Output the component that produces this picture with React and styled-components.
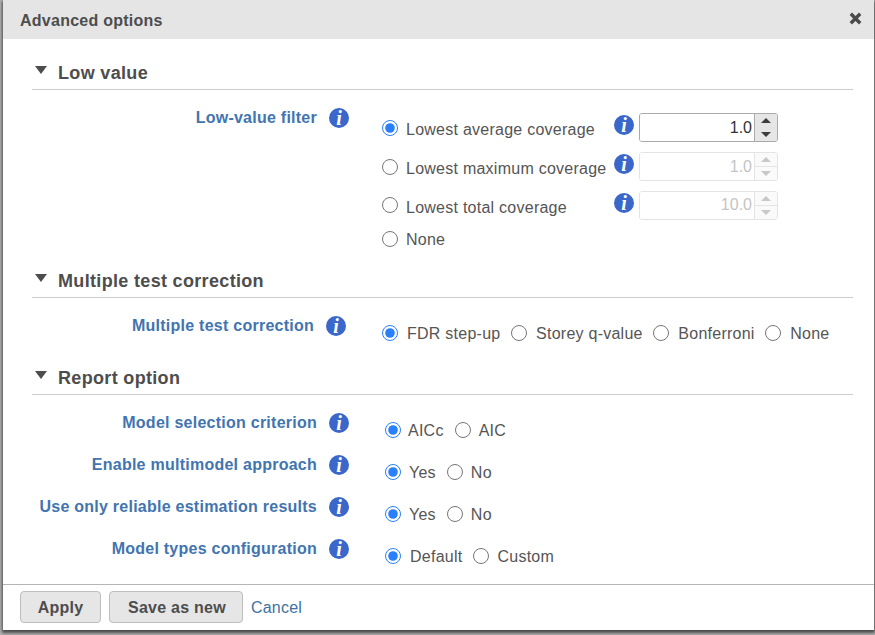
import React from 'react';
import styled, { createGlobalStyle } from 'styled-components';

const GlobalStyle = createGlobalStyle`
  html, body {
    margin: 0;
    padding: 0;
    background: #fff;
    overflow: hidden;
  }
  body {
    font-family: "Liberation Sans", Arial, sans-serif;
    color: #555;
  }
`;

const Page = styled.div`
  width: 875px;
  height: 635px;
  padding: 0 1px 5px 3px;
  box-sizing: border-box;
  background: #b4b4b4;
`;

const Dialog = styled.div`
  height: 630px;
  display: flex;
  flex-direction: column;
  background: #fff;
  box-shadow: 0 2px 3px 1px rgba(0, 0, 0, 0.6);
`;

const Header = styled.div`
  height: 39px;
  flex: none;
  display: flex;
  align-items: center;
  justify-content: space-between;
  padding: 0 12px 0 17px;
  background: #e5e5e5;
`;

const DialogTitle = styled.h1`
  margin: 2px 0 0;
  font-size: 16px;
  font-weight: 700;
  letter-spacing: 0.25px;
  color: #4d4d4d;
`;

const CloseIcon = styled.svg`
  width: 13px;
  height: 13px;
  margin-bottom: 2px;
  fill: #4a4a4a;
`;

const Body = styled.div`
  flex: 1;
  padding: 22px 21px 0 29px;
`;

const SectionHead = styled.div`
  height: 28px;
  display: flex;
  align-items: flex-start;
  gap: 11px;
  padding-left: 3px;
  border-bottom: 1px solid #ccc;
`;

const Caret = styled.span`
  width: 0;
  height: 0;
  margin-top: 5px;
  border-left: 6.5px solid transparent;
  border-right: 6.5px solid transparent;
  border-top: 8px solid #4d4d4d;
`;

const SectionTitle = styled.h2`
  margin: 0;
  font-size: 18px;
  line-height: 25px;
  font-weight: 700;
  letter-spacing: 0.33px;
  color: #4d4d4d;
`;

const FormRow = styled.div`
  display: flex;
  align-items: flex-start;
  height: ${(p) => p.$height}px;
  padding-top: ${(p) => p.$top}px;
`;

const LabelCell = styled.div`
  width: ${(p) => p.$width}px;
  flex: none;
  display: flex;
  justify-content: flex-end;
  align-items: center;
  gap: 12px;
  white-space: nowrap;
`;

const FieldLabel = styled.label`
  font-size: 16px;
  line-height: 20px;
  font-weight: 700;
  letter-spacing: 0.25px;
  color: #4274b0;
`;

const InfoBadge = styled.span`
  width: 20px;
  height: 20px;
  flex: none;
  border-radius: 50%;
  background: #3a67c9;
  color: #fff;
  display: inline-flex;
  align-items: center;
  justify-content: center;
  font-family: "Liberation Serif", serif;
  font-style: italic;
  font-weight: 700;
  font-size: 20px;
  line-height: 20px;
`;

const Controls = styled.div`
  margin-left: ${(p) => p.$left}px;
  margin-top: ${(p) => p.$top || 0}px;
  display: flex;
  align-items: center;
  gap: ${(p) => p.$gap || 10}px;
`;

const CoverageList = styled.div`
  margin-left: 33px;
  margin-top: 2px;
  display: flex;
  flex-direction: column;
  width: 396px;
`;

const CoverageRow = styled.div`
  display: flex;
  align-items: center;
  height: ${(p) => p.$height}px;
`;

const RadioLabel = styled.label`
  display: inline-flex;
  align-items: center;
  flex: none;
  gap: ${(p) => p.$gap || 8}px;
  font-size: 16px;
  line-height: 20px;
  letter-spacing: 0.25px;
  color: #555;
  white-space: nowrap;
  width: ${(p) => (p.$width ? `${p.$width}px` : 'auto')};
`;

const Radio = styled.input.attrs({ type: 'radio' })`
  width: 16px;
  height: 16px;
  margin: 0 0 ${(p) => p.$lift ?? 2}px;
  accent-color: #2a7ffb;
`;

const CoverageInfo = styled.span`
  width: 25px;
  flex: none;
  margin-bottom: 9px;
  display: inline-flex;
`;

const SpinBox = styled.div`
  width: 139px;
  height: 29px;
  flex: none;
  box-sizing: border-box;
  display: flex;
  border: 1px solid ${(p) => (p.$disabled ? '#e4e4e4' : '#aaa')};
  border-radius: 3px;
  overflow: hidden;
  background: #fff;
  margin-bottom: ${(p) => p.$lift}px;
`;

const SpinInput = styled.input`
  flex: 1;
  min-width: 0;
  border: 0;
  padding: 0 2px 0 0;
  text-align: right;
  font-family: "Liberation Sans", Arial, sans-serif;
  font-size: 16px;
  color: ${(p) => (p.disabled ? '#c4c4c4' : '#333')};
  background: #fff;
  outline: none;
`;

const SpinButtons = styled.div`
  width: 22px;
  flex: none;
  display: flex;
  flex-direction: column;
  border-left: 1px solid ${(p) => (p.$disabled ? '#e4e4e4' : '#aaa')};
  background: ${(p) => (p.$disabled ? '#fafafa' : '#e6e6e6')};
`;

const SpinButton = styled.span`
  flex: 1;
  display: flex;
  align-items: center;
  justify-content: center;
  & + & {
    border-top: 1px solid ${(p) => (p.$disabled ? '#e4e4e4' : '#aaa')};
  }
  &::before {
    content: '';
    border-left: 5px solid transparent;
    border-right: 5px solid transparent;
    ${(p) => (p.$dir === 'up' ? 'border-bottom' : 'border-top')}: 5px solid
      ${(p) => (p.$disabled ? '#c8c8c8' : '#3d3d3d')};
  }
`;

const Footer = styled.div`
  height: 39px;
  flex: none;
  display: flex;
  align-items: flex-start;
  padding: 6px 0 0 17px;
  border-top: 1px solid #b5b5b5;
  background: #fff;
`;

const FooterButton = styled.button`
  height: 32px;
  width: ${(p) => p.$width}px;
  margin-right: ${(p) => p.$gap}px;
  padding: 1px 0 0 ${(p) => p.$indent || 0}px;
  border: 1px solid #bdbdbd;
  border-radius: 4px;
  background: #e6e6e6;
  color: #4d4d4d;
  font-family: "Liberation Sans", Arial, sans-serif;
  font-size: 16px;
  font-weight: 700;
  letter-spacing: 0.25px;
`;

const CancelLink = styled.a`
  font-size: 16px;
  line-height: 34px;
  letter-spacing: 0.2px;
  color: #42709f;
  text-decoration: none;
`;

const Spinner = ({ value, disabled, lift }) => (
  <SpinBox $disabled={disabled} $lift={lift}>
    <SpinInput value={value} disabled={disabled} readOnly />
    <SpinButtons $disabled={disabled}>
      <SpinButton $dir="up" $disabled={disabled} />
      <SpinButton $dir="down" $disabled={disabled} />
    </SpinButtons>
  </SpinBox>
);

const Info = () => <InfoBadge>i</InfoBadge>;

const Section = ({ title }) => (
  <SectionHead>
    <Caret />
    <SectionTitle>{title}</SectionTitle>
  </SectionHead>
);

const coverage = [
  { label: 'Lowest average coverage', value: '1.0', checked: true, radioLift: 3, spinLift: 4 },
  { label: 'Lowest maximum coverage', value: '1.0', radioLift: 3, spinLift: 4 },
  { label: 'Lowest total coverage', value: '10.0', radioLift: 5, spinLift: 5 },
];

const reportRows = [
  { label: 'Model selection criterion', name: 'criterion', labelGap: 7, options: ['AICc', 'AIC'] },
  { label: 'Enable multimodel approach', name: 'multimodel', labelGap: 8, options: ['Yes', 'No'] },
  { label: 'Use only reliable estimation results', name: 'reliable', labelGap: 8, options: ['Yes', 'No'] },
  { label: 'Model types configuration', name: 'types', labelGap: 9, options: ['Default', 'Custom'] },
];

const App = () => (
  <>
    <GlobalStyle />
    <Page>
      <Dialog>
        <Header>
          <DialogTitle>Advanced options</DialogTitle>
          <CloseIcon viewBox="0 0 13 13">
            <path d="M0.6 3 L3 0.6 L6.5 4.1 L10 0.6 L12.4 3 L8.9 6.5 L12.4 10 L10 12.4 L6.5 8.9 L3 12.4 L0.6 10 L4.1 6.5 Z" />
          </CloseIcon>
        </Header>
        <Body>
          <Section title="Low value" />
          <FormRow $height={161} $top={18}>
            <LabelCell $width={317}>
              <FieldLabel>Low-value filter</FieldLabel>
              <Info />
            </LabelCell>
            <CoverageList>
              {coverage.map((row) => (
                <CoverageRow key={row.label} $height={39}>
                  <RadioLabel $width={232}>
                    <Radio name="coverage" $lift={row.radioLift} defaultChecked={row.checked} />
                    {row.label}
                  </RadioLabel>
                  <CoverageInfo>
                    <Info />
                  </CoverageInfo>
                  <Spinner value={row.value} disabled={!row.checked} lift={row.spinLift} />
                </CoverageRow>
              ))}
              <CoverageRow $height={26}>
                <RadioLabel>
                  <Radio name="coverage" $lift={3} />
                  None
                </RadioLabel>
              </CoverageRow>
            </CoverageList>
          </FormRow>
          <Section title="Multiple test correction" />
          <FormRow $height={50} $top={18}>
            <LabelCell $width={314}>
              <FieldLabel>Multiple test correction</FieldLabel>
              <Info />
            </LabelCell>
            <Controls $left={36} $top={8} $gap={10.6}>
              {['FDR step-up', 'Storey q-value', 'Bonferroni', 'None'].map((opt, i) => (
                <RadioLabel key={opt} $gap={9}>
                  <Radio name="mtc" defaultChecked={i === 0} />
                  {opt}
                </RadioLabel>
              ))}
            </Controls>
          </FormRow>
          <Section title="Report option" />
          {reportRows.map((row, r) => (
            <FormRow key={row.name} $height={42} $top={r === 0 ? 18 : 0}>
              <LabelCell $width={317}>
                <FieldLabel>{row.label}</FieldLabel>
                <Info />
              </LabelCell>
              <Controls $left={36} $top={8} $gap={11}>
                {row.options.map((opt, i) => (
                  <RadioLabel key={opt} $gap={i === 0 ? row.labelGap : 8}>
                    <Radio name={row.name} defaultChecked={i === 0} />
                    {opt}
                  </RadioLabel>
                ))}
              </Controls>
            </FormRow>
          ))}
        </Body>
        <Footer>
          <FooterButton $width={81} $gap={8}>Apply</FooterButton>
          <FooterButton $width={134} $gap={8} $indent={2}>Save as new</FooterButton>
          <CancelLink href="#">Cancel</CancelLink>
        </Footer>
      </Dialog>
    </Page>
  </>
);

export default App;
